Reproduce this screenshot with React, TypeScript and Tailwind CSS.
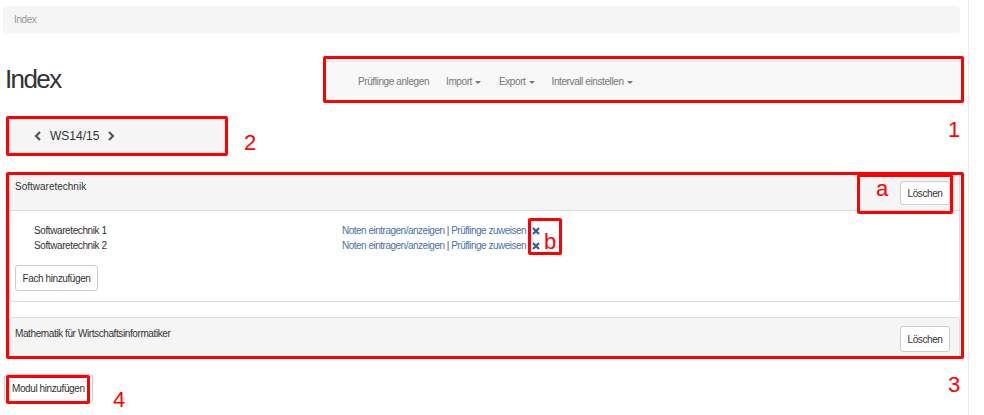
import React from 'react';

const small = "text-[10px] tracking-[-0.4px]";

const Caret: React.FC = () => (
  <span className="inline-block ml-[3px] align-middle w-0 h-0 border-l-[3px] border-r-[3px] border-t-[3px] border-l-transparent border-r-transparent border-t-[#777]" />
);

const Chevron: React.FC<{ dir: 'left' | 'right' }> = ({ dir }) => (
  <svg width="8" height="10" viewBox="0 0 8 10" className="text-[#555]">
    <path
      d={dir === 'left' ? 'M6 1 L2 5 L6 9' : 'M2 1 L6 5 L2 9'}
      fill="none"
      stroke="currentColor"
      strokeWidth="2.2"
    />
  </svg>
);

const Cross: React.FC = () => (
  <svg width="8" height="8" viewBox="0 0 8 8" className="ml-[6px] text-[#2d5d95]">
    <path d="M1 1 L7 7 M7 1 L1 7" stroke="currentColor" strokeWidth="2.2" />
  </svg>
);

const Btn: React.FC<{ children: React.ReactNode; className?: string }> = ({ children, className }) => (
  <button className={`bg-white border border-[#ccc] rounded-[3px] text-[#333] ${small} ${className ?? ''}`}>
    {children}
  </button>
);

const Box: React.FC<{ className: string }> = ({ className }) => (
  <div className={`absolute border-[3px] border-[#ff0000] rounded-[2px] pointer-events-none ${className}`} />
);

const Label: React.FC<{ className: string; children: React.ReactNode }> = ({ className, children }) => (
  <span className={`absolute text-[#ff0000] leading-none text-[22px] ${className}`}>{children}</span>
);

const rows = ['Softwaretechnik 1', 'Softwaretechnik 2'];

const App: React.FC = () => {
  return (
    <div className="relative w-[984px] h-[415px] overflow-hidden bg-white font-['Liberation_Sans',Arial,sans-serif]">
      <div className="absolute left-[968px] top-0 w-px h-full bg-[#ececec]" />

      <div className="w-[957px] ml-[3px] pt-[6px]">
        <div className="h-[27px] bg-[#f5f5f5] rounded-[4px] flex items-center px-[11px]">
          <span className={`text-[#999] ${small}`}>Index</span>
        </div>

        <div className="flex items-start mt-[28px]">
          <h1 className="ml-[2px] mt-[3px] text-[26px] tracking-[-1.6px] leading-[30px] text-[#333] w-[321px]">Index</h1>
          <nav className="ml-auto w-[634px] h-[40px] bg-[#f8f8f8] border-t border-[#e7e7e7] flex items-center pl-[32px] gap-[17px] text-[#777]">
            <span className={small}>Prüflinge anlegen</span>
            <span className={small}>Import<Caret /></span>
            <span className={`${small} ml-[1px]`}>Export<Caret /></span>
            <span className={small}>Intervall einstellen<Caret /></span>
          </nav>
        </div>

        <div className="ml-[6px] mt-[18px] w-[216px] h-[34px] bg-[#f5f5f5] border border-[#e3e3e3] rounded-[3px] flex items-center pl-[24px] gap-[8px] text-[#333]">
          <Chevron dir="left" />
          <span className="text-[12px]">WS14/15</span>
          <Chevron dir="right" />
        </div>

        <div className="ml-[6px] mt-[19px] border border-[#ddd] rounded-[3px]">
          <div className="h-[38px] bg-[#f5f5f5] border-b border-[#ddd] flex justify-between items-start pt-[6px] px-[5px] pr-[9px]">
            <span className="text-[#333] text-[10px]">Softwaretechnik</span>
            <Btn className="w-[50px] h-[24px] mt-[2px]">Löschen</Btn>
          </div>
          <div className="px-[5px] pt-[12px] pb-[10px]">
            {rows.map((r) => (
              <div key={r} className="flex items-center h-[15px]">
                <span className={`pl-[19px] w-[327px] text-[#333] ${small}`}>{r}</span>
                <span className="text-[#4a72a8] text-[10px] tracking-[-0.5px]">
                  Noten eintragen/anzeigen <span className="text-[#555]">|</span> Prüflinge zuweisen
                </span>
                <Cross />
              </div>
            ))}
            <Btn className="mt-[12px] w-[83px] h-[26px]">Fach hinzufügen</Btn>
          </div>
        </div>

        <div className="ml-[6px] mt-[15px] border border-[#ddd] border-b-0 rounded-t-[3px]">
          <div className="h-[38px] bg-[#f5f5f5] flex justify-between items-start pt-[8px] px-[5px] pr-[9px]">
            <span className={`text-[#333] ${small}`}>Mathematik für Wirtschaftsinformatiker</span>
            <Btn className="w-[50px] h-[26px]">Löschen</Btn>
          </div>
        </div>

        <Btn className="mt-[18px] ml-[1px] h-[28px] px-[7px] text-left">Modul hinzufügen</Btn>
      </div>

      <Box className="left-[323px] top-[56px] w-[641px] h-[47px]" />
      <Box className="left-[6px] top-[116px] w-[222px] h-[40px]" />
      <Box className="left-[6px] top-[172px] w-[958px] h-[187px]" />
      <Box className="left-[857px] top-[174px] w-[96px] h-[40px]" />
      <Box className="left-[528px] top-[218px] w-[34px] h-[37px]" />
      <Box className="left-[6px] top-[375px] w-[84px] h-[29px]" />

      <Label className="left-[948px] top-[119px]">1</Label>
      <Label className="left-[244px] top-[132px]">2</Label>
      <Label className="left-[948px] top-[374px]">3</Label>
      <Label className="left-[113px] top-[389px]">4</Label>
      <Label className="left-[876px] top-[178px]">a</Label>
      <Label className="left-[544px] top-[231px]">b</Label>
    </div>
  );
};

export default App;
